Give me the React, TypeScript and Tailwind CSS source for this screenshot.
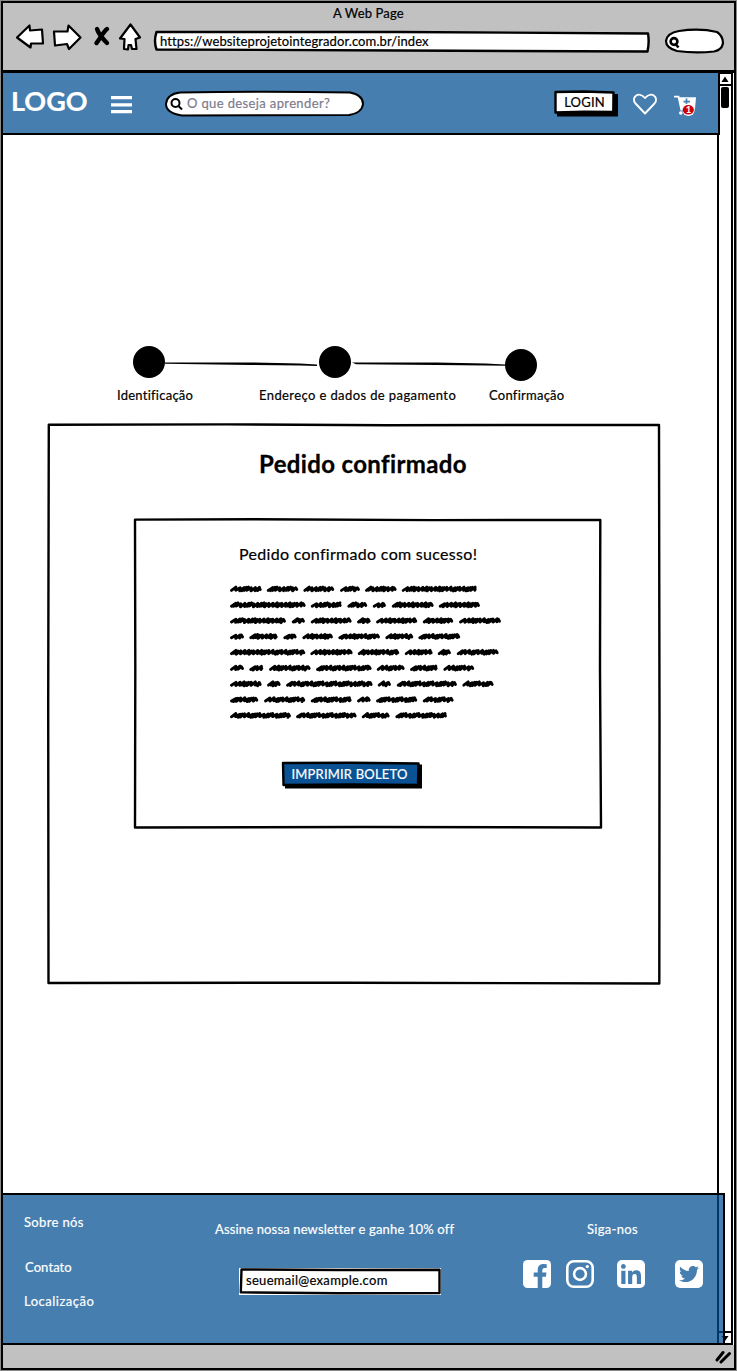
import React from "react";
import { FaLinkedin, FaSquareTwitter } from "react-icons/fa6";

const WORDS: number[][][] = [
  [[30, 125], [140, 235], [250, 343], [360, 420], [435, 530], [545, 770]],
  [[30, 257], [272, 365], [382, 442], [458, 498], [515, 641], [656, 780]],
  [[30, 198], [215, 255], [272, 395], [411, 452], [468, 592], [608, 700], [717, 843]],
  [[30, 72], [88, 173], [190, 230], [247, 339], [355, 480], [496, 580], [595, 721]],
  [[30, 256], [271, 398], [413, 538], [554, 638], [653, 693], [710, 836]],
  [[30, 72], [88, 130], [147, 272], [288, 455], [470, 554], [570, 653], [670, 763]],
  [[30, 125], [141, 182], [198, 458], [473, 513], [530, 711], [727, 821]],
  [[30, 115], [132, 256], [272, 395], [411, 452], [468, 592], [608, 701]],
  [[30, 213], [228, 410], [425, 509], [526, 681]],
];

const STEPS = [5, 4.6, 2.8, 2.4, 3.2, 5, 4.8, 3, 2.4];

function scribble(x1: number, x2: number, y: number, seed: number) {
  let x = x1 + 1.5;
  let d = `M${x.toFixed(1)} ${(y + 1.4).toFixed(1)}`;
  let i = seed;
  while (x < x2 - 6) {
    const step = STEPS[i % STEPS.length];
    const j = ((i * 7) % 4) * 0.25;
    d += `L${(x + 4.4).toFixed(1)} ${(y - 1.9 + j).toFixed(1)}L${(x + step * 0.85).toFixed(1)} ${(y + 1.2 + j).toFixed(1)}`;
    x += step * 0.85;
    i++;
  }
  return d + `L${(x2 - 2.6).toFixed(1)} ${(y - 1.3).toFixed(1)}L${(x2 - 1.5).toFixed(1)} ${(y + 0.6).toFixed(1)}`;
}

function Scribbles() {
  return (
    <svg className="block h-[143px] w-[275px]" viewBox="0 0 275 143" fill="none" stroke="#000" strokeWidth="2.9" strokeLinecap="round" strokeLinejoin="round">
      {WORDS.map((line, r) =>
        line.map(([a, b], i) => (
          <path key={`${r}-${i}`} d={scribble(a / 3 - 10, b / 3 - 10, 9 + r * 15.8, r * 3 + i * 2)} />
        )),
      )}
    </svg>
  );
}

function Outline({ w, h, d, fill = "none", shadow }: { w: number; h: number; d: string; fill?: string; shadow?: string }) {
  return (
    <svg className="pointer-events-none absolute inset-0 h-full w-full overflow-visible" viewBox={`0 0 ${w} ${h}`} fill={fill} stroke="#000" strokeWidth="2.4" strokeLinejoin="round">
      {shadow && <path d={shadow} fill="#000" stroke="none" />}
      <path d={d} />
    </svg>
  );
}

function Toolbar() {
  return (
    <header className="flex h-[70px] shrink-0 flex-col border-b-[3px] border-black bg-[#c1c1c1] pl-px">
      <div className="h-[19px] pt-px pl-[329px] text-[13px] leading-[18px] tracking-[0.15px]">A Web Page</div>
      <div className="flex h-[30px] items-start">
        <svg className="ml-[11px] h-[30px] w-[130px] shrink-0" viewBox="15 22 130 30" fill="#fff" stroke="#000" strokeWidth="2.2" strokeLinejoin="round">
          <path d="M17 37.5L29.5 25.5L30 30.5L42 29.5L43 43.5L31 43.5L30.5 47.5Z" />
          <path d="M54 31.5L67.5 31.5L68.5 25.5L80.5 37.5L69 49L67 44L55 45.5Z" />
          <path d="M130.5 24.5L140 37.5L135.5 39L136.5 49L132 49L131 45L128.5 45L128 49.5L124 49L124.5 39L120 38.5Z" />
          <path d="M97 29C98 32 103 39 107 43M107 29C103 32 100 39 96.5 43" strokeWidth="4.4" strokeLinecap="round" />
        </svg>
        <div className="relative mt-[8px] ml-[8px] flex h-[22px] w-[498px] shrink-0 items-center pl-[7px]">
          <Outline w={498} h={22} fill="#fff" d="M3.5 2L247 2L495 3.5Q496.5 12 494.5 21.5L247 20.5L3.5 19.5Q0.5 11 3.5 2Z" />
          <span className="relative text-[13px] leading-[18px] tracking-[0.1px]">https://websiteprojetointegrador.com.br/index</span>
        </div>
        <svg className="mt-[4px] ml-[12px] h-[28px] w-[62px] shrink-0" viewBox="663 26 62 28" fill="#fff" stroke="#000" strokeWidth="2.2">
          <path d="M679 31Q700 28 717 32Q723 36 723 43Q722 50 714 51.5Q695 53.5 677 51Q666 48 666 41Q667 33 679 31Z" />
          <circle cx="674" cy="41.5" r="3.4" fill="none" strokeWidth="2.6" />
          <path d="M675.5 44L678.500 47.5" strokeWidth="2.6" />
        </svg>
      </div>
    </header>
  );
}

function NavBar() {
  return (
    <nav className="relative z-10 flex h-[62px] w-[717px] shrink-0 items-start border-r-2 border-b-2 border-black bg-[#467eb0] pl-px">
      <span className="mt-[12px] w-[107px] pl-[7px] text-[27px] leading-[32px] font-bold text-white">LOGO</span>
      <svg className="mt-[22px] h-[20px] w-[22px]" viewBox="0 0 22 20" fill="#fff">
        <path d="M0 1h21v3.3H0zM0 8.3h21v3.3H0zM0 15h21v3.3H0z" />
      </svg>
      <div className="relative mt-[17px] ml-[31px] flex h-[28px] w-[202px] items-center pb-[2px] pl-[23px]">
        <svg className="absolute inset-0 h-full w-full" viewBox="164 90 202 28" fill="#fff" stroke="#000" strokeWidth="2">
          <path d="M180 92.5Q265 91 350 92.5Q363 95 363 104Q362 113 349 115L182 115.5Q166 113 166 104Q167 94 180 92.5Z" />
          <circle cx="175.5" cy="103" r="4" />
          <path d="M178.5 106L182 109.5" />
        </svg>
        <span className="relative text-[13px] leading-[18px] tracking-[0.37px] text-[#7d7c8c]">O que deseja aprender?</span>
      </div>
      <button className="relative mt-[17px] ml-[188px] flex h-[24px] w-[61px] items-center justify-center pb-px">
        <Outline w={61} h={24} fill="#fff" shadow="M3 4H64V26.500H3Z" d="M1.5 2L30 1.5L59.5 2.5L59.300 22L30 21.8L1.5 22.5Z" />
        <span className="relative text-[13px] leading-[18px] tracking-[0.2px]">LOGIN</span>
      </button>
      <svg className="mt-[19px] ml-[16px] h-[24px] w-[27px] shrink-0" viewBox="631 92 27 24" fill="none" stroke="#fff" strokeWidth="1.9" strokeLinejoin="round">
        <path d="M645 113.5L635.5 103.5C630.5 97.5 638.5 90.5 645 98C651.5 90.5 659.5 97.5 654.5 103.5Z" />
      </svg>
      <svg className="mt-[20px] ml-[15px] h-[26px] w-[26px] shrink-0" viewBox="673 93 26 26">
        <path d="M674 96.7L678.5 96.7L681.5 110.5" fill="none" stroke="#fff" strokeWidth="1.8" />
        <path d="M679 97.2H696L695 109H681.2Z" fill="#fff" />
        <path d="M686.5 98.5V104M683.5 101.7H690" stroke="#467eb0" strokeWidth="1.7" />
        <circle cx="680.8" cy="113" r="1.8" fill="#fff" />
        <circle cx="688.5" cy="109.8" r="6.2" fill="#fff" />
        <ellipse cx="688.3" cy="109.8" rx="5.6" ry="4.8" fill="#d00000" />
        <text x="688.5" y="113.3" fontSize="9.5" fontWeight="bold" textAnchor="middle" fill="#fff">1</text>
      </svg>
    </nav>
  );
}

function Stepper() {
  return (
    <section className="mt-[210px]">
      <div className="flex h-[37px] items-start pl-[129px]">
        <span className="mt-[1px] size-8 rounded-full bg-black" />
        <svg className="h-[37px] w-[154px]" viewBox="165 345 154 37">
          <path d="M164 362.4L250 362.5L300 363.5L317 364.600L317 366L300 365.5L250 365L164 363.8Z" />
        </svg>
        <span className="mt-[1px] size-8 rounded-full bg-black" />
        <svg className="h-[37px] w-[154px]" viewBox="351 345 154 37">
          <path d="M352 362.4L436 362.5L486 363.5L505 364.4L505 365.7L486 365.5L436 365L356 364.3Z" />
        </svg>
        <span className="mt-[4px] size-8 rounded-full bg-black" />
      </div>
      <div className="flex pt-[4px] text-[13px] leading-[18px] whitespace-nowrap">
        <span className="w-[255px] pl-[113px] tracking-[0.25px]">Identificação</span>
        <span className="w-[230px] tracking-[0.4px]">Endereço e dados de pagamento</span>
        <span className="tracking-[0.25px]">Confirmação</span>
      </div>
    </section>
  );
}

function Confirmation() {
  return (
    <section className="relative mt-[20px] ml-[43px] h-[560px] w-[614px]">
      <Outline w={614} h={560} d="M1.8 0.7L180 0.4L340 1.2L612 0.9L612.5 300L612.3 559.5L300 558.7L1.5 559L1.2 280Z" />
      <h1 className="pt-[24px] pl-[212px] text-[24px] leading-[32px] font-bold tracking-[0.35px] [-webkit-text-stroke:0.3px]">Pedido confirmado</h1>
      <div className="relative mt-[39px] ml-[86px] h-[310px] w-[469px]">
        <Outline w={469} h={310} d="M2 0.6L120 0.3L300 1.1L467.3 1L467 150L468 308.5L230 308L2 308.5L2.3 150Z" />
        <h2 className="pt-[24px] pl-[106px] text-[16px] leading-[22px] tracking-[0.3px]">Pedido confirmado com sucesso!</h2>
        <div className="mt-[15px] ml-[97px]">
          <Scribbles />
        </div>
        <button className="relative mt-[39px] ml-[149px] flex h-[25px] w-[138px] items-center justify-center pr-[3px] pb-[2px]">
          <Outline w={138} h={25} fill="#0a5294" shadow="M3 2.500H140V26.500H3Z" d="M1 1L70 0.8L136.5 1.5L136 23L70 22.4L1.5 23Z" />
          <span className="relative text-[13px] leading-[18px] tracking-[0.2px] whitespace-nowrap text-white">IMPRIMIR BOLETO</span>
        </button>
      </div>
    </section>
  );
}

function Footer() {
  return (
    <footer className="relative z-10 mt-auto flex h-[152px] w-[722px] shrink-0 border-y-2 border-r-2 border-black bg-[#004d92]/[.725] pl-px text-[13px] leading-[18px] whitespace-nowrap text-white">
      <div className="flex w-[211px] flex-col pt-[18px] pl-[20px]">
        <a className="tracking-[0.35px]">Sobre nós</a>
        <a className="mt-[27px] pl-px tracking-[0.1px]">Contato</a>
        <a className="mt-[16px] tracking-[0.5px]">Localização</a>
      </div>
      <div className="w-[308px] pt-[25px]">
        <p className="tracking-[0.15px]">Assine nossa newsletter e ganhe 10% off</p>
        <div className="relative mt-[30px] ml-[24px] flex h-[27px] w-[202px] items-center bg-white pb-[3px] pl-[7px] text-black">
          <Outline w={202} h={27} d="M2.500 1.500L100 2L200.500 1.700L200.500 25L100 25.300L1.800 24.300Z" />
          <span className="relative tracking-[0.3px]">seuemail@example.com</span>
        </div>
      </div>
      <div className="pt-[25px]">
        <p className="pl-[64px] tracking-[0.3px]">Siga-nos</p>
        <div className="mt-[20px] flex h-[32px] items-center">
          <svg className="size-[28px]" viewBox="0 0 28 28">
            <rect width="28" height="28" rx="4.5" fill="#fff" />
            <path d="M14.7 28V16.7H10.7V12.6H14.7V10C14.7 6 17 4 20.5 4Q22.5 4 23.7 4.3V8H21.5Q19.3 8 19.3 10.2V12.6H23.5L22.9 16.7H19.3V28Z" fill="#467eb0" />
          </svg>
          <svg className="ml-[15px] size-[28px]" viewBox="0 0 28 28" fill="none" stroke="#fff">
            <rect x="1.3" y="1.3" width="25.4" height="25.4" rx="6.5" strokeWidth="2.6" />
            <circle cx="14" cy="14" r="5.9" strokeWidth="2.6" />
            <circle cx="21.3" cy="6.6" r="1.7" fill="#fff" stroke="none" />
          </svg>
          <span className="ml-[23px] flex size-[28px] items-center justify-center overflow-hidden rounded-[5px]">
            <FaLinkedin className="size-[32px] shrink-0" />
          </span>
          <span className="ml-[30px] flex size-[28px] items-center justify-center overflow-hidden rounded-[5px]">
            <FaSquareTwitter className="size-[32px] shrink-0" />
          </span>
        </div>
      </div>
    </footer>
  );
}

function ScrollBar() {
  return (
    <aside className="flex w-[16px] shrink-0 flex-col items-center border-x-2 border-b-2 border-black">
      <div className="flex h-[13px] w-full items-center justify-center border-t border-b-2 border-black">
        <svg className="h-[7px] w-[8px]" viewBox="0 0 8 7"><path d="M4 0.5L7.5 6H0.5Z" /></svg>
      </div>
      <div className="mt-[1px] h-[21px] w-[8px] rounded-[2px] bg-black" />
      <div className="mt-auto flex h-[12px] w-full items-center justify-center border-t-2 border-black">
        <svg className="h-[7px] w-[8px]" viewBox="0 0 8 7"><path d="M4 6L7.5 1H0.5Z" /></svg>
      </div>
    </aside>
  );
}

export default function App() {
  return (
    <div className="h-[1371px] w-[737px] bg-white pt-px pl-px font-['Lato',sans-serif] text-black [-webkit-text-stroke:0.2px]">
      <div className="flex h-[1369px] w-[735px] flex-col border-2 border-black shadow-[0_0_0_1px_#8a8a8a]">
        <Toolbar />
        <div className="flex h-[1272px] shrink-0">
          <div className="flex w-[714px] shrink-0 flex-col">
            <NavBar />
            <main className="pl-px">
              <Stepper />
              <Confirmation />
            </main>
            <Footer />
          </div>
          <ScrollBar />
        </div>
        <div className="flex flex-1 items-center justify-end bg-[#c1c1c1] pr-[2px]">
          <svg className="h-[14px] w-[17px]" viewBox="715 1351 17 14" stroke="#000" strokeWidth="3" strokeLinecap="round">
            <path d="M717 1361L723 1353.5M721 1363L729.5 1354.5" />
          </svg>
        </div>
      </div>
    </div>
  );
}
